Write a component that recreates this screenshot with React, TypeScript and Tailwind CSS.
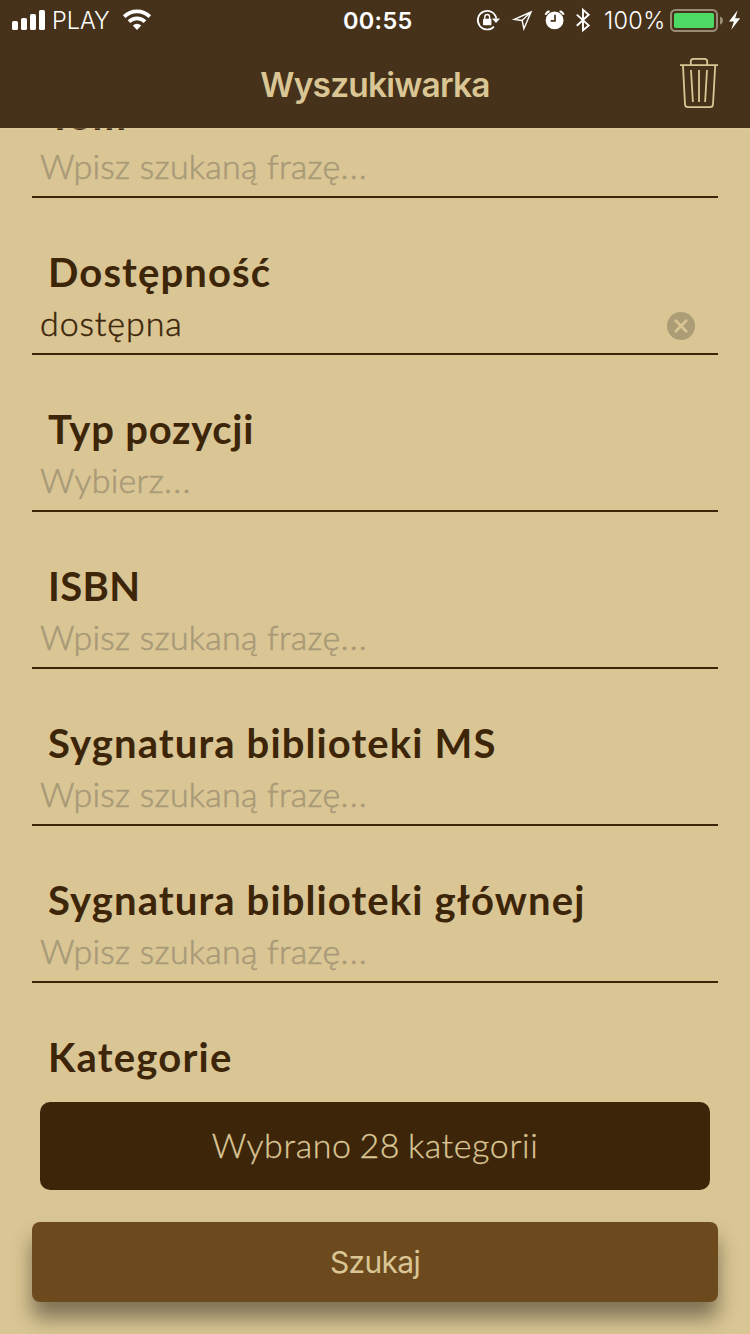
import React from "react";

type FieldProps = { label: string; placeholder?: string; value?: string; labelClass?: string };

function Label({ children, className = "tracking-[1.12px]" }: { children: React.ReactNode; className?: string }) {
  return (
    <div className={`h-[49px] whitespace-nowrap pl-4 text-[40px] font-bold leading-[50px] text-[#3c2509] ${className}`}>
      {children}
    </div>
  );
}

function Field({ label, placeholder = "Wpisz szukaną frazę", value, labelClass }: FieldProps) {
  return (
    <div className="h-[157px] shrink-0 border-b-2 border-[#3c2509] pt-[49px]">
      <Label className={labelClass}>{label}</Label>
      <div className="flex h-[53px] items-center justify-between pl-2 pr-[23px]">
        {value ? (
          <span className="whitespace-nowrap text-[34px] font-light leading-[53px] tracking-[0.9px] text-[#3c2509] [-webkit-text-stroke:0.5px_#3c2509]">
            {value}
          </span>
        ) : (
          <span className="whitespace-nowrap text-[34px] font-light leading-[53px] tracking-[0.25px] text-[#a99a78] [-webkit-text-stroke:0.6px_#a99a78]">
            {placeholder}
            <span className="tracking-[1.2px]">...</span>
          </span>
        )}
        {value && (
          <svg className="mt-[7px] h-7 w-7" viewBox="0 0 28 28">
            <circle cx="14" cy="14" r="14" fill="#ac9d76" />
            <path d="M8.8 8.8 19.2 19.2M19.2 8.8 8.8 19.2" stroke="#dac694" strokeWidth="2.7" strokeLinecap="round" />
          </svg>
        )}
      </div>
    </div>
  );
}

function StatusBar() {
  return (
    <div className="flex h-10 text-white">
      <div className="flex w-[343px] shrink-0">
        <svg className="h-10 w-[52px]" viewBox="0 0 52 40" fill="currentColor">
          <rect x="12" y="21" width="6" height="9" rx="1.6" />
          <rect x="21" y="18" width="6" height="12" rx="1.6" />
          <rect x="30" y="14" width="6" height="16" rx="1.6" />
          <rect x="39" y="10" width="6" height="20" rx="1.6" />
        </svg>
        <span className="w-[66px] whitespace-nowrap text-[23.5px] leading-[41px] font-light">PLAY</span>
        <svg className="h-10 w-[40px]" viewBox="118 0 40 40">
          <path d="M124.2 16.6a18.2 18.2 0 0 1 25.6 0" fill="none" stroke="currentColor" strokeWidth="3.8" />
          <path d="M129 21.6a11.4 11.4 0 0 1 16 0" fill="none" stroke="currentColor" strokeWidth="3.7" />
          <path d="M132.8 25.5a6 6 0 0 1 8.4 0L137 30Z" fill="currentColor" />
        </svg>
      </div>
      <span className="w-[72px] whitespace-nowrap text-[23.5px] font-semibold leading-[41px] tracking-[0.3px]">00:55</span>
      <div className="ml-auto flex">
        <svg className="h-10 w-[133px]" viewBox="470 0 133 40" fill="currentColor">
          <path d="M493.9 26.6A9.3 9.3 0 1 1 496.3 18.5" fill="none" stroke="currentColor" strokeWidth="1.7" />
          <path d="M492 18.6h8L496 23Z" />
          <rect x="483" y="18.8" width="8.4" height="6.4" rx="0.8" />
          <path d="M484.8 19.3v-2.4a2.4 2.4 0 0 1 4.8 0v2.4" fill="none" stroke="currentColor" strokeWidth="1.4" />
          <path d="M531 12 514.3 19.4 522.1 20.5 523.9 28.7ZM531 12 522.1 20.5" fill="none" stroke="currentColor" strokeWidth="1.4" />
          <circle cx="554.6" cy="20.4" r="8.9" />
          <path d="M555 14.8v6h-4.4" fill="none" stroke="#46321a" strokeWidth="1.7" />
          <path d="M545.6 14.8q.8-2.9 4-3.6M563.6 14.8q-.8-2.9-4-3.6" fill="none" stroke="currentColor" strokeWidth="2.1" />
          <path d="M576.8 14.6 588.7 25.4 583 30.2V9.8L588.7 14.8 576.8 25.8" fill="none" stroke="currentColor" strokeWidth="1.9" />
        </svg>
        <span className="w-[65px] whitespace-nowrap pl-px text-[23.5px] leading-[41px] font-light tracking-[0.3px]">100%</span>
        <svg className="h-10 w-[82px]" viewBox="668 0 82 40">
          <rect x="671" y="10" width="46" height="21" rx="4.5" fill="none" stroke="#9a8b77" strokeWidth="2" />
          <path d="M720 16.5q3 1 3 4t-3 4Z" fill="#9a8b77" />
          <rect x="674" y="13" width="40" height="15" rx="1.8" fill="#4cd964" />
          <path d="M737.6 10.2 729 21.4h4.9L731.2 29.8l9-11.6h-5Z" fill="currentColor" />
        </svg>
      </div>
    </div>
  );
}

function TrashIcon() {
  return (
    <svg className="h-[52px] w-10" viewBox="679 57 40 52" fill="none" stroke="#dac694" strokeWidth="1.8">
      <path d="M680 65.1h38M690.8 65v-3.4q0-2.7 2.7-2.7h11q2.7 0 2.7 2.7V65" />
      <path d="M683 66l2 38.2q.2 3 3 3h22q2.8 0 3-3L715.2 66" />
      <path d="M691 70l1.9 32M699 70v32M707 70l-1.9 32" />
    </svg>
  );
}

export default function App() {
  return (
    <div className="flex h-[1334px] w-[750px] flex-col overflow-hidden bg-[#dac694] font-[Lato,sans-serif]">
      <header className="relative z-10 h-32 shrink-0 bg-[#46321a] font-[Inter,sans-serif] shadow-[0_1px_0_rgba(226,211,170,0.3)]">
        <StatusBar />
        <div className="grid h-[88px] grid-cols-[1fr_auto_1fr] items-center">
          <span />
          <h1 className="h-[88px] text-[33.5px] font-semibold leading-[90px] tracking-[-0.8px] text-[#dac694]">
            Wyszukiwarka
          </h1>
          <button className="mr-[31px] mt-[-2px] justify-self-end" aria-label="Wyczyść">
            <TrashIcon />
          </button>
        </div>
      </header>
      <main className="flex min-h-0 flex-1 flex-col overflow-hidden px-8">
        <div className="-mt-[87px] flex shrink-0 flex-col">
          <Field label="Tom" />
          <Field label="Dostępność" value="dostępna" />
          <Field label="Typ pozycji" placeholder="Wybierz" labelClass="tracking-[0.75px]" />
          <Field label="ISBN" labelClass="tracking-[0.4px]" />
          <Field label="Sygnatura biblioteki MS" />
          <Field label="Sygnatura biblioteki głównej" />
        </div>
        <section className="shrink-0 pt-[49px]">
          <Label className="tracking-[1.2px]">Kategorie</Label>
          <button className="mx-2 mt-[21px] block h-[88px] w-[670px] rounded-[10px] bg-[#3c2509] pb-1 text-[34px] font-light tracking-[0.6px] text-[#dac694] [word-spacing:-2px] [-webkit-text-stroke:0.3px_#dac694]">
            Wybrano 28 kategorii
          </button>
        </section>
        <button className="mt-8 h-20 shrink-0 rounded-lg bg-[#6d4a1e] font-[Inter,sans-serif] text-[30px] tracking-[-0.7px] text-[#dac694] shadow-[0_16px_20px_rgba(0,0,0,0.42)]">
          Szukaj
        </button>
      </main>
    </div>
  );
}
